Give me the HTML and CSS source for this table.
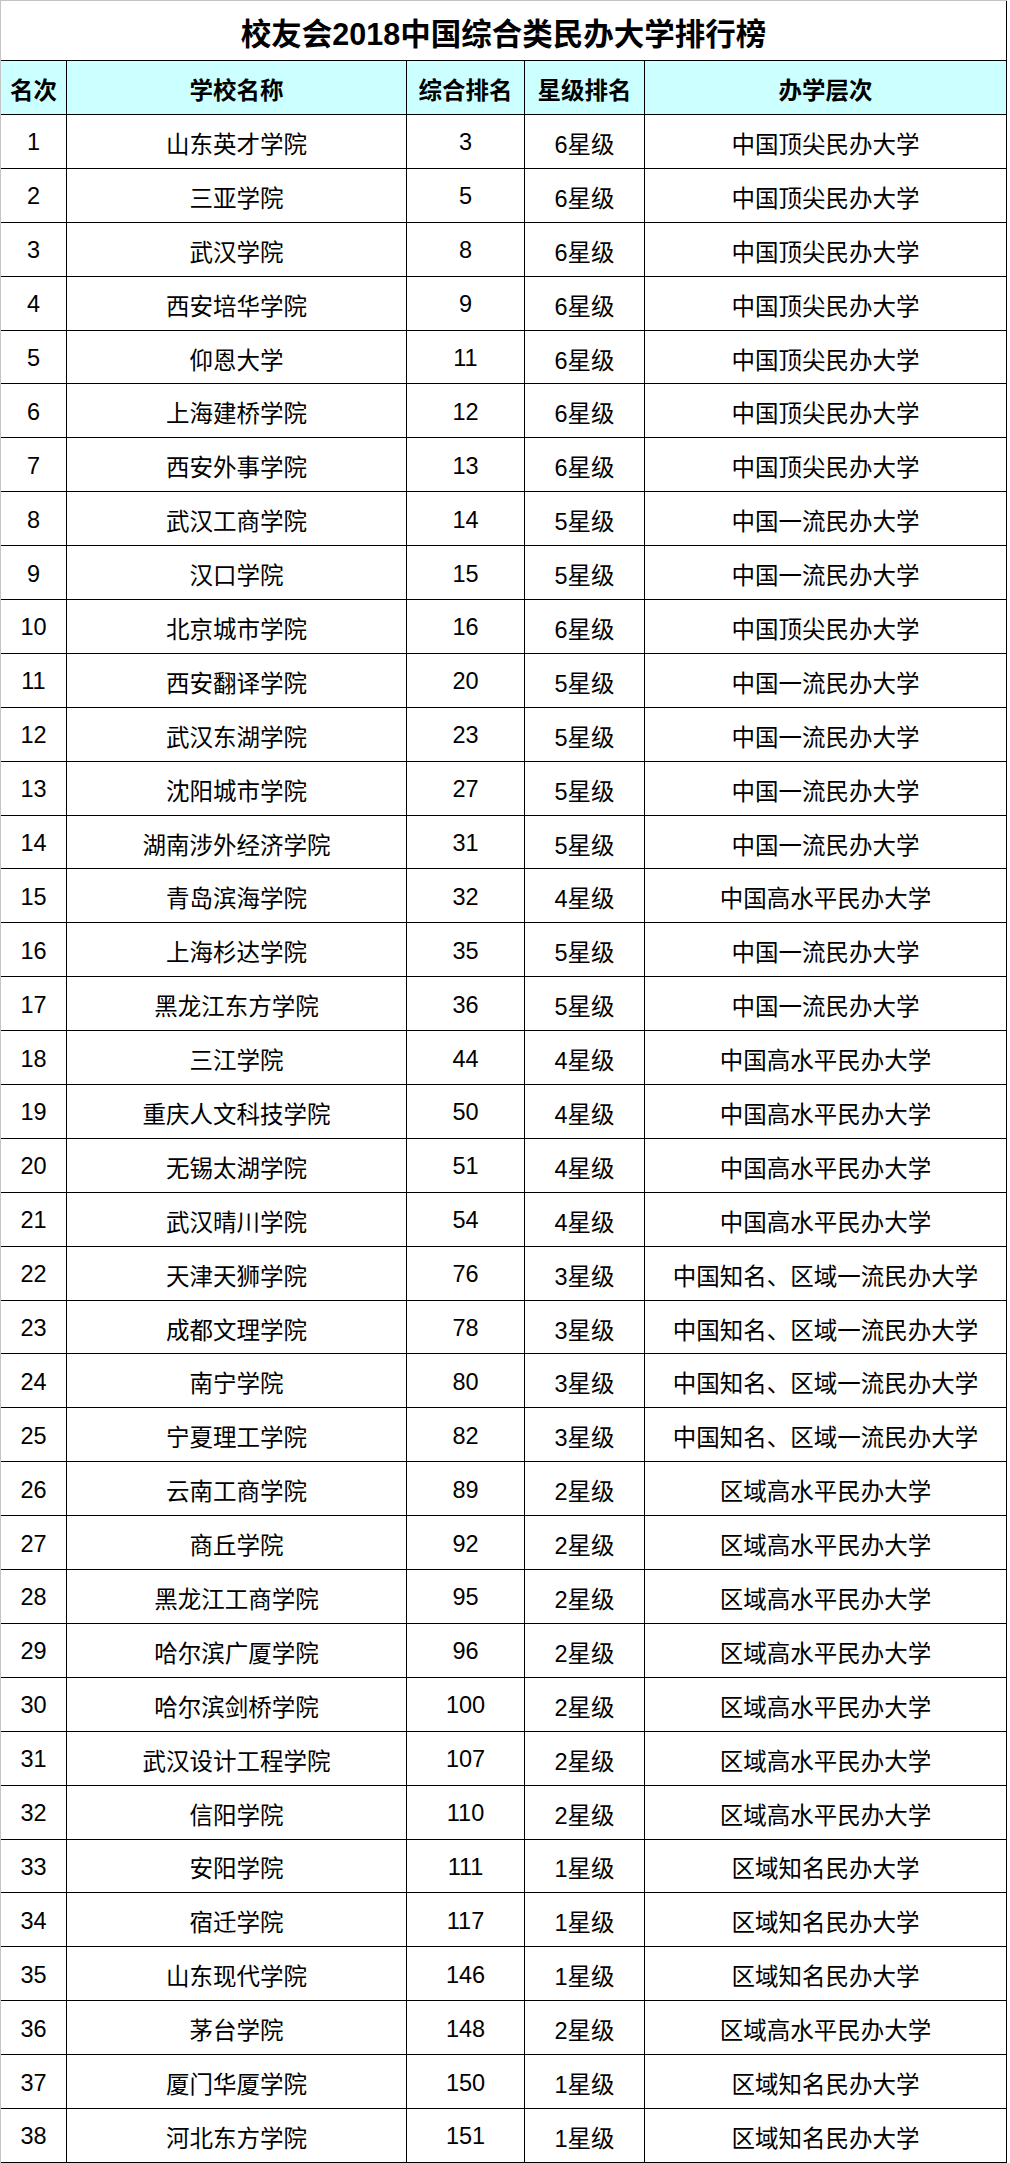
FILE: index.html
```html
<!DOCTYPE html>
<html lang="zh-CN">
<head>
<meta charset="utf-8">
<title>校友会2018中国综合类民办大学排行榜</title>
<link rel="stylesheet" href="styles.css">
</head>
<body>
<div class="sheet">
  <div class="title">校友会2018中国综合类民办大学排行榜</div>
  <div class="cell head">名次</div><div class="cell head">学校名称</div><div class="cell head">综合排名</div><div class="cell head">星级排名</div><div class="cell head">办学层次</div>
  <div class="cell">1</div><div class="cell">山东英才学院</div><div class="cell">3</div><div class="cell">6星级</div><div class="cell">中国顶尖民办大学</div>
  <div class="cell">2</div><div class="cell">三亚学院</div><div class="cell">5</div><div class="cell">6星级</div><div class="cell">中国顶尖民办大学</div>
  <div class="cell">3</div><div class="cell">武汉学院</div><div class="cell">8</div><div class="cell">6星级</div><div class="cell">中国顶尖民办大学</div>
  <div class="cell">4</div><div class="cell">西安培华学院</div><div class="cell">9</div><div class="cell">6星级</div><div class="cell">中国顶尖民办大学</div>
  <div class="cell">5</div><div class="cell">仰恩大学</div><div class="cell">11</div><div class="cell">6星级</div><div class="cell">中国顶尖民办大学</div>
  <div class="cell">6</div><div class="cell">上海建桥学院</div><div class="cell">12</div><div class="cell">6星级</div><div class="cell">中国顶尖民办大学</div>
  <div class="cell">7</div><div class="cell">西安外事学院</div><div class="cell">13</div><div class="cell">6星级</div><div class="cell">中国顶尖民办大学</div>
  <div class="cell">8</div><div class="cell">武汉工商学院</div><div class="cell">14</div><div class="cell">5星级</div><div class="cell">中国一流民办大学</div>
  <div class="cell">9</div><div class="cell">汉口学院</div><div class="cell">15</div><div class="cell">5星级</div><div class="cell">中国一流民办大学</div>
  <div class="cell">10</div><div class="cell">北京城市学院</div><div class="cell">16</div><div class="cell">6星级</div><div class="cell">中国顶尖民办大学</div>
  <div class="cell">11</div><div class="cell">西安翻译学院</div><div class="cell">20</div><div class="cell">5星级</div><div class="cell">中国一流民办大学</div>
  <div class="cell">12</div><div class="cell">武汉东湖学院</div><div class="cell">23</div><div class="cell">5星级</div><div class="cell">中国一流民办大学</div>
  <div class="cell">13</div><div class="cell">沈阳城市学院</div><div class="cell">27</div><div class="cell">5星级</div><div class="cell">中国一流民办大学</div>
  <div class="cell">14</div><div class="cell">湖南涉外经济学院</div><div class="cell">31</div><div class="cell">5星级</div><div class="cell">中国一流民办大学</div>
  <div class="cell">15</div><div class="cell">青岛滨海学院</div><div class="cell">32</div><div class="cell">4星级</div><div class="cell">中国高水平民办大学</div>
  <div class="cell">16</div><div class="cell">上海杉达学院</div><div class="cell">35</div><div class="cell">5星级</div><div class="cell">中国一流民办大学</div>
  <div class="cell">17</div><div class="cell">黑龙江东方学院</div><div class="cell">36</div><div class="cell">5星级</div><div class="cell">中国一流民办大学</div>
  <div class="cell">18</div><div class="cell">三江学院</div><div class="cell">44</div><div class="cell">4星级</div><div class="cell">中国高水平民办大学</div>
  <div class="cell">19</div><div class="cell">重庆人文科技学院</div><div class="cell">50</div><div class="cell">4星级</div><div class="cell">中国高水平民办大学</div>
  <div class="cell">20</div><div class="cell">无锡太湖学院</div><div class="cell">51</div><div class="cell">4星级</div><div class="cell">中国高水平民办大学</div>
  <div class="cell">21</div><div class="cell">武汉晴川学院</div><div class="cell">54</div><div class="cell">4星级</div><div class="cell">中国高水平民办大学</div>
  <div class="cell">22</div><div class="cell">天津天狮学院</div><div class="cell">76</div><div class="cell">3星级</div><div class="cell">中国知名、区域一流民办大学</div>
  <div class="cell">23</div><div class="cell">成都文理学院</div><div class="cell">78</div><div class="cell">3星级</div><div class="cell">中国知名、区域一流民办大学</div>
  <div class="cell">24</div><div class="cell">南宁学院</div><div class="cell">80</div><div class="cell">3星级</div><div class="cell">中国知名、区域一流民办大学</div>
  <div class="cell">25</div><div class="cell">宁夏理工学院</div><div class="cell">82</div><div class="cell">3星级</div><div class="cell">中国知名、区域一流民办大学</div>
  <div class="cell">26</div><div class="cell">云南工商学院</div><div class="cell">89</div><div class="cell">2星级</div><div class="cell">区域高水平民办大学</div>
  <div class="cell">27</div><div class="cell">商丘学院</div><div class="cell">92</div><div class="cell">2星级</div><div class="cell">区域高水平民办大学</div>
  <div class="cell">28</div><div class="cell">黑龙江工商学院</div><div class="cell">95</div><div class="cell">2星级</div><div class="cell">区域高水平民办大学</div>
  <div class="cell">29</div><div class="cell">哈尔滨广厦学院</div><div class="cell">96</div><div class="cell">2星级</div><div class="cell">区域高水平民办大学</div>
  <div class="cell">30</div><div class="cell">哈尔滨剑桥学院</div><div class="cell">100</div><div class="cell">2星级</div><div class="cell">区域高水平民办大学</div>
  <div class="cell">31</div><div class="cell">武汉设计工程学院</div><div class="cell">107</div><div class="cell">2星级</div><div class="cell">区域高水平民办大学</div>
  <div class="cell">32</div><div class="cell">信阳学院</div><div class="cell">110</div><div class="cell">2星级</div><div class="cell">区域高水平民办大学</div>
  <div class="cell">33</div><div class="cell">安阳学院</div><div class="cell">111</div><div class="cell">1星级</div><div class="cell">区域知名民办大学</div>
  <div class="cell">34</div><div class="cell">宿迁学院</div><div class="cell">117</div><div class="cell">1星级</div><div class="cell">区域知名民办大学</div>
  <div class="cell">35</div><div class="cell">山东现代学院</div><div class="cell">146</div><div class="cell">1星级</div><div class="cell">区域知名民办大学</div>
  <div class="cell">36</div><div class="cell">茅台学院</div><div class="cell">148</div><div class="cell">2星级</div><div class="cell">区域高水平民办大学</div>
  <div class="cell">37</div><div class="cell">厦门华厦学院</div><div class="cell">150</div><div class="cell">1星级</div><div class="cell">区域知名民办大学</div>
  <div class="cell">38</div><div class="cell">河北东方学院</div><div class="cell">151</div><div class="cell">1星级</div><div class="cell">区域知名民办大学</div>
</div>
</body>
</html>
```

FILE: styles.css
```css
html, body {
  margin: 0;
  padding: 0;
  background: #ffffff;
}

.sheet {
  width: 1007px;
  box-sizing: border-box;
  border-top: 1px solid #c4c4c4;
  border-left: 1px solid #c4c4c4;
  display: grid;
  grid-template-columns: 66px 340px 118px 120px 362px;
  grid-template-rows: 60px 54px repeat(38, 53.9px);
  font-family: "Liberation Sans", "Noto Sans CJK SC", sans-serif;
  color: #000000;
}

.title {
  grid-column: 1 / -1;
  box-sizing: border-box;
  border-right: 1px solid #000;
  border-bottom: 1px solid #000;
  display: flex;
  align-items: center;
  justify-content: center;
  font-size: 30.5px;
  font-weight: bold;
  padding-top: 3px;
}

.cell {
  box-sizing: border-box;
  border-right: 1px solid #000;
  border-bottom: 1px solid #000;
  display: flex;
  align-items: center;
  justify-content: center;
  font-size: 23.5px;
  white-space: nowrap;
  padding-top: 3px;
}

.head {
  background: #ccffff;
  font-weight: bold;
}
```
